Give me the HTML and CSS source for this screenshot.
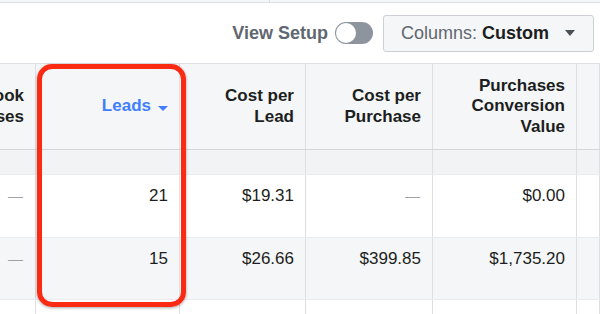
FILE: index.html
```html
<!DOCTYPE html>
<html lang="en">
<head>
  <meta charset="UTF-8">
  <title>Ads Manager Columns</title>
  <link rel="stylesheet" href="styles.css">
</head>
<body>
  <!-- strip left over from the panel above -->
  <div class="topstrip"><div class="topstrip-left"></div></div>

  <!-- toolbar -->
  <div class="toolbar">
    <span class="view-setup">View Setup</span>
    <span class="toggle"><span class="knob"></span></span>
    <button type="button" class="columns-btn">
      <span class="lbl">Columns:</span>&nbsp;<span class="val">Custom</span>
      <span class="caret"></span>
    </button>
  </div>

  <!-- table -->
  <div class="table-wrap">
    <div class="grid head">
      <div class="cell"><span>On-Facebook<br>Purchases</span></div>
      <div class="cell sorted"><span>Leads</span><i class="sort-caret"></i></div>
      <div class="cell"><span>Cost per<br>Lead</span></div>
      <div class="cell"><span>Cost per<br>Purchase</span></div>
      <div class="cell"><span>Purchases<br>Conversion<br>Value</span></div>
      <div class="cell"></div>
    </div>
    <div class="grid band">
      <div class="cell"></div><div class="cell"></div><div class="cell"></div>
      <div class="cell"></div><div class="cell"></div><div class="cell"></div>
    </div>
    <div class="grid row">
      <div class="cell dash">—</div>
      <div class="cell">21</div>
      <div class="cell">$19.31</div>
      <div class="cell dash">—</div>
      <div class="cell">$0.00</div>
      <div class="cell"></div>
    </div>
    <div class="grid row alt">
      <div class="cell dash">—</div>
      <div class="cell">15</div>
      <div class="cell">$26.66</div>
      <div class="cell">$399.85</div>
      <div class="cell">$1,735.20</div>
      <div class="cell"></div>
    </div>
    <div class="grid row last">
      <div class="cell"></div><div class="cell"></div><div class="cell"></div>
      <div class="cell"></div><div class="cell"></div><div class="cell"></div>
    </div>

    <!-- annotation box round the Leads column -->
    <div class="highlight"></div>
  </div>
</body>
</html>
```

FILE: styles.css
```css
:root {
  --bg-gray: #f5f6f7;
  --line: #dddfe2;
  --text: #1c1e21;
  --text-muted: #606770;
  --blue: #4080ff;
  --red: #fb2a13;
}
* { box-sizing: border-box; margin: 0; padding: 0; }
body {
  width: 600px;
  height: 314px;
  overflow: hidden;
  background: #fff;
  font-family: "Liberation Sans", Arial, sans-serif;
  color: var(--text);
}

.topstrip {
  height: 3px;
  background: var(--bg-gray);
  border-bottom: 1px solid var(--line);
}
.topstrip-left { width: 270px; height: 2px; border-right: 1px solid var(--line); }

.toolbar {
  height: 60px;
  display: flex;
  align-items: center;
  justify-content: flex-end;
  padding-right: 6px;
}
.view-setup {
  font-size: 18px;
  font-weight: bold;
  color: var(--text-muted);
  margin-right: 7px;
}
.toggle {
  width: 38px; height: 22px;
  border-radius: 11px;
  background: #8d949e;
  padding: 1px;
  display: flex;
  margin-right: 10px;
}
.knob {
  width: 20px; height: 20px;
  border-radius: 50%;
  background: #fff;
}
.columns-btn {
  height: 37px;
  display: flex;
  align-items: center;
  padding: 0 18px 0 17px;
  border: 1px solid #ccd0d5;
  border-radius: 3px;
  background: var(--bg-gray);
  font-family: inherit;
  font-size: 18px;
  color: var(--text);
}
.columns-btn .lbl { color: var(--text-muted); }
.columns-btn .val { font-weight: bold; }
.columns-btn .caret {
  margin-left: 16px;
  border-left: 5.5px solid transparent;
  border-right: 5.5px solid transparent;
  border-top: 6px solid #4b4f56;
}

/* Table */
.table-wrap {
  position: relative;
  border-top: 1px solid var(--line);
}
.grid {
  display: grid;
  grid-template-columns: 130px 144px 126px 127px 144px 1fr;
  margin-left: -94px;
  width: calc(100% + 94px);
  font-size: 17px;
  line-height: 20px;
}
.cell {
  border-right: 1px solid var(--line);
  padding-right: 11px;
  text-align: right;
}

.head {
  height: 86px;
  background: var(--bg-gray);
  border-bottom: 1px solid #d3d6db;
  box-shadow: 0 1px 1px rgba(0,0,0,.06);
  font-weight: bold;
  line-height: 20.5px;
}
.head .cell {
  display: flex;
  align-items: center;
  justify-content: flex-end;
}
.head .sorted { color: var(--blue); }
.sort-caret {
  margin: 3px 0 0 7px;
  border-left: 5px solid transparent;
  border-right: 5px solid transparent;
  border-top: 5px solid var(--blue);
}

.band {
  height: 25px;
  background: #f2f3f5;
  border-bottom: 1px solid #e9ebee;
}

.row {
  height: 63px;
  border-bottom: 1px solid #e9ebee;
}
.row .cell { padding-top: 11px; }
.row.alt { height: 62px; background: var(--bg-gray); }
.row.last { height: 20px; border-bottom: none; }
.dash { color: #9ea3aa; font-size: 15px; padding-right: 12px; }

.highlight {
  position: absolute;
  left: 37px; top: 0;
  width: 149px; height: 243px;
  border: 5px solid var(--red);
  border-radius: 15px;
  box-shadow: 0 1px 3px rgba(0,0,0,.35);
}
```
